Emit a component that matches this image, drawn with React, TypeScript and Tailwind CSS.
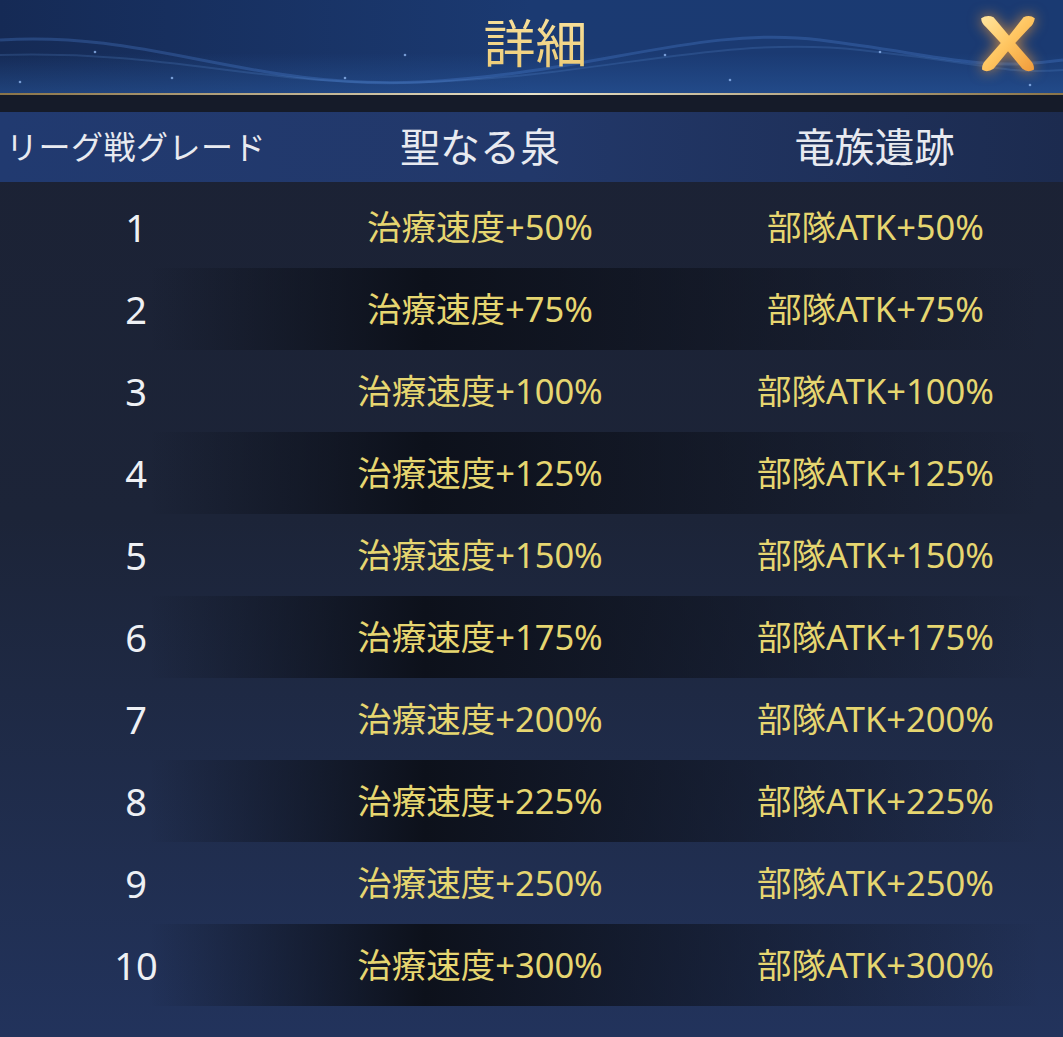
import React from "react";

const rows = [
  { grade: "1", heal: "+50%", atk: "+50%" },
  { grade: "2", heal: "+75%", atk: "+75%" },
  { grade: "3", heal: "+100%", atk: "+100%" },
  { grade: "4", heal: "+125%", atk: "+125%" },
  { grade: "5", heal: "+150%", atk: "+150%" },
  { grade: "6", heal: "+175%", atk: "+175%" },
  { grade: "7", heal: "+200%", atk: "+200%" },
  { grade: "8", heal: "+225%", atk: "+225%" },
  { grade: "9", heal: "+250%", atk: "+250%" },
  { grade: "10", heal: "+300%", atk: "+300%" },
];

const font = "font-['Noto_Sans','Noto_Sans_CJK_JP',sans-serif]";

const CloseIcon = () => (
  <svg width="66" height="66" viewBox="0 0 64 64" className="drop-shadow-[0_0_7px_rgba(255,160,50,0.75)]">
    <defs>
      <linearGradient id="xg" x1="0" y1="0" x2="1" y2="1">
        <stop offset="0" stopColor="#ffe6a0" />
        <stop offset="0.5" stopColor="#ffc560" />
        <stop offset="1" stopColor="#f09a3a" />
      </linearGradient>
    </defs>
    {/* two flared strokes */}
    <path
      d="M6 8 Q12 4 18 7 L33 25 L47 7 Q53 4 58 8 Q57 14 53 17 L39 32 L53 48 Q58 53 57 58 Q51 61 46 57 L32 40 L18 57 Q12 61 7 58 Q6 53 11 48 L25 32 L11 17 Q6 13 6 8 Z"
      fill="url(#xg)"
    />
  </svg>
);

const Header = () => (
  <div className="relative h-[93px] overflow-hidden bg-gradient-to-r from-[#152a55] via-[#1b3a72] to-[#1a3a72]">
    <div className="absolute inset-x-0 bottom-0 h-[40px] bg-gradient-to-t from-[#2a5aa0]/50 to-transparent" />
    <svg className="absolute inset-0" width="1063" height="93" viewBox="0 0 1063 93">
      <path d="M0 40 C150 30 250 90 420 82 S700 25 820 40 S980 72 1063 60" stroke="#4f86d6" strokeOpacity="0.3" strokeWidth="3" fill="none" />
      <path d="M0 55 C180 50 260 88 430 82 S720 35 860 50 S1000 74 1063 70" stroke="#6aa0e8" strokeOpacity="0.18" strokeWidth="2" fill="none" />
      {[
        [95, 52], [172, 78], [405, 55], [345, 78], [665, 55], [730, 80], [880, 52], [20, 82], [1030, 85],
      ].map(([x, y], i) => (
        <circle key={i} cx={x} cy={y} r="1.3" fill="#9cc4ff" fillOpacity="0.7" />
      ))}
    </svg>
    <div className={`relative flex h-full items-center justify-center text-[52px] leading-none ${font} bg-gradient-to-b from-[#fbe7a6] to-[#e8c266] bg-clip-text text-transparent`}>
      <span className="-mt-[8px] pl-[8px]">詳細</span>
    </div>
    <div className="absolute right-[22px] top-[10px]">
      <CloseIcon />
    </div>
  </div>
);

export default function App() {
  return (
    <div className={`flex h-[1037px] w-[1063px] flex-col overflow-hidden bg-gradient-to-b from-[#1b2133] via-[#1c2438] to-[#22335c] ${font}`}>
      <Header />
      <div className="h-[2px] bg-gradient-to-r from-[#8a7448] via-[#e8e2c8] to-[#8a7448]" />
      <div className="h-[17px] bg-[#151b29]" />
      <div className="grid h-[70px] grid-cols-[272px_416px_1fr] items-center bg-gradient-to-r from-[#213a70] via-[#22386a] to-[#1c2b4f] text-[#e8eaf0]">
        <div className="whitespace-nowrap pl-[6px] text-[32px] tracking-[0.5px]">リーグ戦グレード</div>
        <div className="text-center text-[40px]">聖なる泉</div>
        <div className="pr-[2px] text-center text-[40px]">竜族遺跡</div>
      </div>
      <div className="mt-[4px] flex flex-col">
        {rows.map((r, i) => (
          <div
            key={r.grade}
            className={
              i % 2 === 1
                ? "grid h-[82px] grid-cols-[272px_416px_1fr] items-center bg-gradient-to-r from-transparent from-[14%] via-[#0d111b] via-[40%] to-transparent to-[98%]"
                : "grid h-[82px] grid-cols-[272px_416px_1fr] items-center"
            }
          >
            <div className="text-center text-[38px] leading-none text-[#eef0f4]">{r.grade}</div>
            <div className="whitespace-nowrap text-center text-[34.5px] leading-none text-[#e6d670]">
              治療速度{r.heal}
            </div>
            <div className="whitespace-nowrap text-center text-[34.5px] leading-none text-[#e6d670]">
              部隊ATK{r.atk}
            </div>
          </div>
        ))}
      </div>
    </div>
  );
}
